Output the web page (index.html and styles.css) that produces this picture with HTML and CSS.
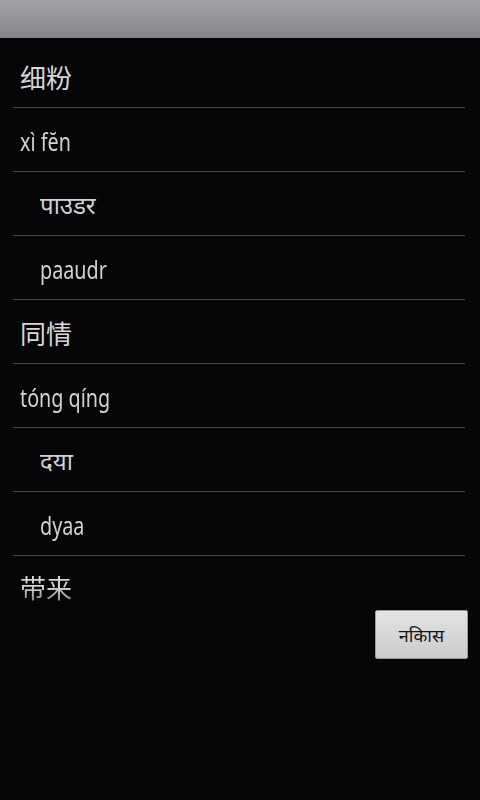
FILE: index.html
```html
<!DOCTYPE html>
<html lang="zh">
<head>
<meta charset="utf-8">
<title>Words</title>
<link rel="stylesheet" href="styles.css">
</head>
<body>
<div class="titlebar"></div>
<ul class="list">
  <li class="row hanzi">细粉</li>
  <li class="row latin"><span class="txt">xì fĕn</span></li>
  <li class="row indent deva" lang="hi">पाउडर</li>
  <li class="row indent latin"><span class="txt">paaudr</span></li>
  <li class="row hanzi">同情</li>
  <li class="row latin"><span class="txt">tóng qíng</span></li>
  <li class="row indent deva" lang="hi">दया</li>
  <li class="row indent latin"><span class="txt">dyaa</span></li>
  <li class="row hanzi partial">带来</li>
</ul>
<div class="actions">
  <button class="btn" lang="hi">नकिास</button>
</div>
</body>
</html>
```
FILE: styles.css
```css
html, body {
  margin: 0;
  padding: 0;
  background: #060508;
  width: 480px;
  height: 800px;
  overflow: hidden;
}
body {
  font-family: "Noto Sans", "Noto Sans CJK SC", "Noto Sans Devanagari", "Lohit Devanagari", sans-serif;
  color: #d2d2d2;
}
.titlebar {
  height: 38px;
  background: linear-gradient(to bottom, #a4a3a6, #858488);
}
.list {
  list-style: none;
  margin: 6px 0 0 0;
  padding: 0;
  height: 560px;
}
.row {
  margin: 0 15px 0 13px;
  border-bottom: 1px solid #4a4a4c;
  display: flex;
  align-items: center;
  padding: 2px 0 0 7px;
  height: 61px;
  font-size: 20px;
  white-space: nowrap;
}
.hanzi {
  font-size: 26px;
  font-family: "Noto Sans CJK SC", sans-serif;
  color: #d6d6d6;
}
.row.partial {
  height: 46px;
  padding-top: 2px;
  align-items: flex-end;
  border-bottom: none;
  line-height: 34px;
  color: transparent;
  background: linear-gradient(to bottom, #d6d6d6 30px, #8a8a8a 46px);
  -webkit-background-clip: text;
  background-clip: text;
}
.deva {
  font-size: 24px;
}
.latin .txt {
  display: inline-block;
  font-size: 26px;
  transform: scaleX(0.76);
  transform-origin: left center;
}
.indent {
  padding-left: 27px;
}
.actions {
  display: flex;
  justify-content: flex-end;
  padding: 6px 12px 0 0;
}
.btn {
  width: 93px;
  height: 49px;
  border: 1px solid #9a9a9a;
  border-radius: 2px;
  background: linear-gradient(to bottom, #e4e4e4, #cbcbcb);
  color: #151515;
  font-family: "Noto Sans", "Noto Sans Devanagari", sans-serif;
  font-size: 18px;
  padding: 0;
}
```
